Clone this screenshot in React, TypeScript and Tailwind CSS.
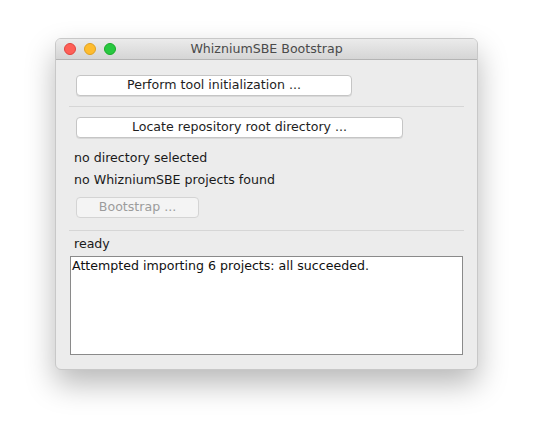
import React from 'react';

const font = { fontFamily: '"DejaVu Sans", "Liberation Sans", sans-serif' };

const MacButton: React.FC<{ label: string; width: string; disabled?: boolean }> = ({ label, width, disabled }) => (
  <div
    className={`${width} h-[21px] rounded-[4px] border flex items-center justify-center text-[12.6px] leading-none ${
      disabled
        ? 'bg-[#f4f4f4] border-[#d4d4d4] text-[#9c9c9c]'
        : 'bg-white border-[#c5c5c5] text-[#1e1e1e] shadow-[0_1px_0_rgba(0,0,0,0.08)]'
    }`}
  >
    {label}
  </div>
);

const App: React.FC = () => {
  return (
    <div className="w-[534px] h-[444px] bg-white pt-[38px] pl-[55px]" style={font}>
      <div className="w-[423px] h-[332px] rounded-[6px] bg-[#ececec] border border-[#c8c8c8] shadow-[0_14px_30px_rgba(0,0,0,0.28)] overflow-hidden flex flex-col">
        {/* title bar */}
        <div className="h-[21px] flex items-center relative bg-gradient-to-b from-[#ebebeb] to-[#d5d5d5] border-b border-[#b4b4b4]">
          <div className="flex gap-[8px] pl-[8px]">
            <span className="w-[12px] h-[12px] rounded-full bg-[#fe5f57] border border-[#e0443e]" />
            <span className="w-[12px] h-[12px] rounded-full bg-[#febc2e] border border-[#dea123]" />
            <span className="w-[12px] h-[12px] rounded-full bg-[#28c840] border border-[#1aab29]" />
          </div>
          <div className="absolute inset-0 flex items-center justify-center text-[12.6px] text-[#4a4a4a]">
            WhizniumSBE Bootstrap
          </div>
        </div>

        {/* body */}
        <div className="flex flex-col pl-[13px] pr-[13px] pt-[15px]">
          <div className="pl-[7px]">
            <MacButton label="Perform tool initialization ..." width="w-[276px]" />
          </div>
          <div className="h-px bg-[#d6d6d6] mt-[10px] mb-[10px]" />
          <div className="pl-[7px]">
            <MacButton label="Locate repository root directory ..." width="w-[327px]" />
          </div>
          <div className="pl-[5px] mt-[12px] text-[12.6px] text-[#1a1a1a] leading-[15px]">no directory selected</div>
          <div className="pl-[5px] mt-[7px] text-[12.6px] text-[#1a1a1a] leading-[15px]">no WhizniumSBE projects found</div>
          <div className="pl-[7px] mt-[10px]">
            <MacButton label="Bootstrap ..." width="w-[123px]" disabled />
          </div>
          <div className="h-px bg-[#d6d6d6] mt-[12px]" />
          <div className="pl-[5px] mt-[5px] text-[12.6px] text-[#1a1a1a] leading-[15px]">ready</div>
          <div className="ml-[1px] mt-[5px] w-[393px] h-[99px] bg-white border border-[#8a8a8a] px-[1px] pt-[1px] text-[12.6px] text-[#111] leading-[15px]">
            Attempted importing 6 projects: all succeeded.
          </div>
        </div>
      </div>
    </div>
  );
};

export default App;
